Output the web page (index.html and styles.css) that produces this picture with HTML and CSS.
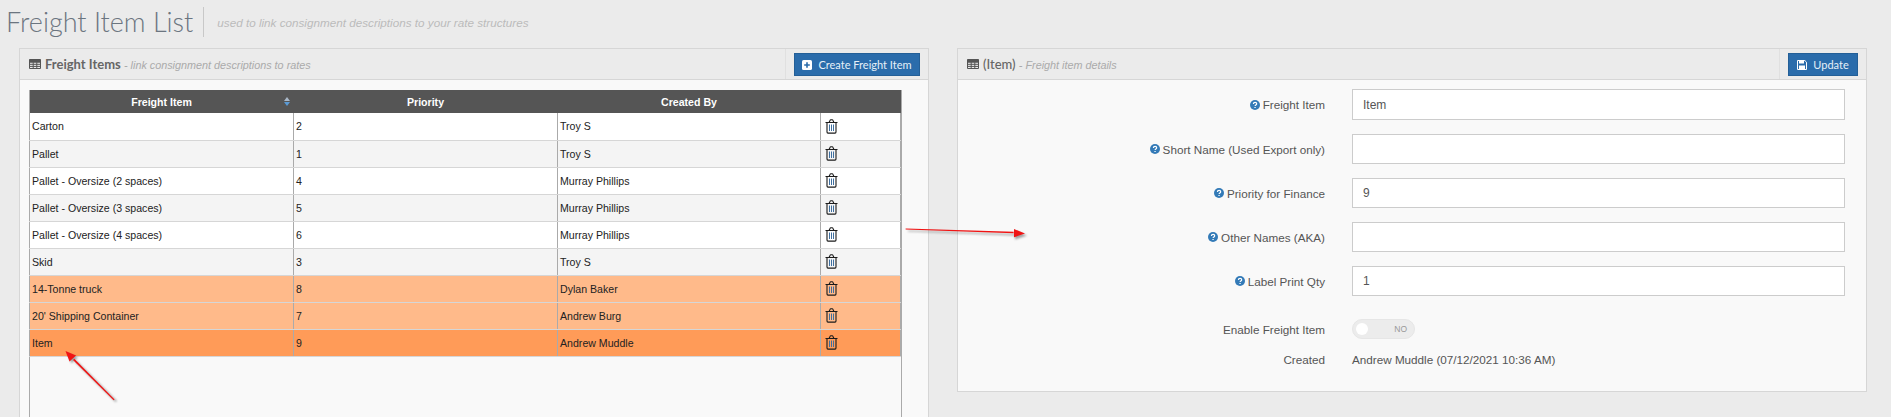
FILE: index.html
```html
<!DOCTYPE html>
<html lang="en">
<head>
<meta charset="utf-8">
<title>Freight Item List</title>
<link rel="stylesheet" href="styles.css">
</head>
<body>
<svg width="0" height="0" class="defs">
  <symbol id="i-table" viewBox="0 0 12 10"><path d="M.5.5h11v9H.5zM.5 3.2h11M.5 5.3h11M.5 7.4h11M4.2 3.2v6.3M7.8 3.2v6.3" fill="none" stroke="currentColor"/><path d="M.5.5h11v2.7H.5z" fill="currentColor"/></symbol>
  <symbol id="i-trash" viewBox="0 0 13 15"><path d="M2 3.5v9.6q0 1 1 1h7q1 0 1-1V3.5M.5 3.5h12M4.2 3.3l.9-2.1q.2-.5.7-.5h1.4q.5 0 .7.5l.9 2.1" fill="none" stroke="currentColor" stroke-width="1.1"/><path d="M4.5 5.5v6.5M6.5 5.5v6.5M8.5 5.5v6.5" fill="none" stroke="#3f6f9f" stroke-width="1"/></symbol>
  <symbol id="i-help" viewBox="0 0 10 10"><circle cx="5" cy="5" r="5" fill="currentColor"/><path d="M3.4 3.9c0-1 .7-1.6 1.7-1.6s1.6.6 1.6 1.4c0 1.2-1.6 1.2-1.6 2.3" fill="none" stroke="#fff" stroke-width="1.2"/><path d="M4.4 6.9h1.3v1.2H4.4z" fill="#fff"/></symbol>
</svg>

<header class="page-head">
  <h1 class="page-title">Freight Item List</h1>
  <p class="page-sub">used to link consignment descriptions to your rate structures</p>
</header>

<main class="panels">
  <section class="panel panel-list">
    <div class="panel-head">
      <h2 class="panel-title"><svg class="icon-table"><use href="#i-table"/></svg>Freight Items <small>- link consignment descriptions to rates</small></h2>
      <div class="panel-action">
        <button class="btn btn-create" type="button">
          <svg class="btn-icon" viewBox="0 0 10 10"><rect width="10" height="10" rx="1.6" fill="#fff"/><path d="M5 2.2v5.6M2.2 5h5.6" stroke="#2a6cab" stroke-width="1.6"/></svg>
          Create Freight Item
        </button>
      </div>
    </div>
    <div class="panel-body list-body">
      <div class="table-wrap">
        <table class="grid">
          <colgroup><col class="c1"><col class="c2"><col class="c3"><col class="c4"></colgroup>
          <thead>
            <tr>
              <th class="sortable">Freight Item<span class="sort"><i class="up"></i><i class="down"></i></span></th>
              <th>Priority</th>
              <th>Created By</th>
              <th></th>
            </tr>
          </thead>
          <tbody>
            <tr><td>Carton</td><td>2</td><td>Troy S</td><td><svg class="trash"><use href="#i-trash"/></svg></td></tr>
            <tr class="alt"><td>Pallet</td><td>1</td><td>Troy S</td><td><svg class="trash"><use href="#i-trash"/></svg></td></tr>
            <tr><td>Pallet - Oversize (2 spaces)</td><td>4</td><td>Murray Phillips</td><td><svg class="trash"><use href="#i-trash"/></svg></td></tr>
            <tr class="alt"><td>Pallet - Oversize (3 spaces)</td><td>5</td><td>Murray Phillips</td><td><svg class="trash"><use href="#i-trash"/></svg></td></tr>
            <tr><td>Pallet - Oversize (4 spaces)</td><td>6</td><td>Murray Phillips</td><td><svg class="trash"><use href="#i-trash"/></svg></td></tr>
            <tr class="alt"><td>Skid</td><td>3</td><td>Troy S</td><td><svg class="trash"><use href="#i-trash"/></svg></td></tr>
            <tr class="flag"><td>14-Tonne truck</td><td>8</td><td>Dylan Baker</td><td><svg class="trash"><use href="#i-trash"/></svg></td></tr>
            <tr class="flag"><td>20' Shipping Container</td><td>7</td><td>Andrew Burg</td><td><svg class="trash"><use href="#i-trash"/></svg></td></tr>
            <tr class="selected"><td>Item</td><td>9</td><td>Andrew Muddle</td><td><svg class="trash"><use href="#i-trash"/></svg></td></tr>
          </tbody>
        </table>
      </div>
    </div>
  </section>

  <section class="panel panel-detail">
    <div class="panel-head">
      <h2 class="panel-title"><svg class="icon-table"><use href="#i-table"/></svg>(Item) <small>- Freight item details</small></h2>
      <div class="panel-action">
        <button class="btn btn-update" type="button">
          <svg class="btn-icon" viewBox="0 0 10 10"><path d="M.5.5h7.3l1.7 1.7v7.3H.5z" fill="none" stroke="#fff"/><path d="M2 .5h5v3H2zM2 5.5h6v4H2z" fill="#fff"/></svg>
          Update
        </button>
      </div>
    </div>
    <form class="panel-body form">
      <label class="f-label"><svg class="help"><use href="#i-help"/></svg>Freight Item</label>
      <input class="f-input f-first" type="text" value="Item">
      <label class="f-label"><svg class="help"><use href="#i-help"/></svg>Short Name (Used Export only)</label>
      <input class="f-input" type="text" value="">
      <label class="f-label"><svg class="help"><use href="#i-help"/></svg>Priority for Finance</label>
      <input class="f-input" type="text" value="9">
      <label class="f-label"><svg class="help"><use href="#i-help"/></svg>Other Names (AKA)</label>
      <input class="f-input" type="text" value="">
      <label class="f-label"><svg class="help"><use href="#i-help"/></svg>Label Print Qty</label>
      <input class="f-input" type="text" value="1">
      <label class="f-label f-toggle-row">Enable Freight Item</label>
      <div class="toggle f-toggle-row"><span class="knob"></span><span class="toggle-text">NO</span></div>
      <div class="f-label f-static">Created</div>
      <div class="f-value f-static">Andrew Muddle (07/12/2021 10:36 AM)</div>
    </form>
  </section>
</main>

<svg class="annotations" width="1891" height="417" viewBox="0 0 1891 417" aria-hidden="true">
  <defs><filter id="soft" x="-30%" y="-30%" width="160%" height="160%"><feGaussianBlur stdDeviation="1.1"/></filter></defs>
  <g filter="url(#soft)" fill="#555" opacity=".55" transform="translate(2 2)">
    <path d="M113.5 400 73 360l1.5-1.3L115 399z"/><path d="M65.5 351l10.5 4.6-6.6 5.6z"/>
    <path d="M906 228.4l107 3.5v1.6l-107-4z"/><path d="M1013 229l12 4.6-12 3.8z"/>
  </g>
  <g fill="#f01414">
    <path d="M113.6 400.2 73 360l1.3-1.2L114.6 399.4z"/><path d="M65.5 351l10.6 4.6-6.6 5.9z"/>
    <path d="M905.6 228.4l108 3.4v1.4l-108-3.6z"/><path d="M1014 229l11 4.6-11 3.6z"/>
  </g>
</svg>
</body>
</html>
```

FILE: styles.css
```css
* { box-sizing: border-box; }
html, body { margin: 0; height: 417px; overflow: hidden; }
body {
  background: #ebebeb;
  font-family: "Liberation Sans", Arial, sans-serif;
  color: #555;
  position: relative;
}
.defs { position: absolute; }

.page-head {
  display: flex;
  align-items: center;
  height: 48px;
  padding: 5px 0 9px 6px;
}
.page-title {
  margin: 0;
  padding-right: 10px;
  font: 300 27px/30px Lato, sans-serif;
  color: #6b7580;
  white-space: nowrap;
  border-right: 1px solid #c8c8c8;
}
.page-sub {
  margin: 0 0 0 13px;
  font-size: 11.7px;
  font-style: italic;
  color: #bbb;
}

.panels {
  display: flex;
  align-items: flex-start;
  gap: 28px;
  padding-left: 19px;
}
.panel {
  border: 1px solid #d6d6d6;
  display: flex;
  flex-direction: column;
}
.panel-list { width: 910px; height: 400px; }
.panel-detail { width: 910px; }

.panel-head {
  display: flex;
  justify-content: space-between;
  height: 31px;
  border-bottom: 1px solid #d6d6d6;
}
.panel-title {
  margin: 0;
  padding-left: 9px;
  display: flex;
  align-items: center;
  font: 700 13px/18px Lato, sans-serif;
  color: #666;
  white-space: pre;
}
.panel-detail .panel-title { font-weight: 500; padding-left: 9px; }
.panel-title small {
  font: italic 400 10.8px "Liberation Sans", Arial, sans-serif;
  color: #aaa;
  margin-top: 2px;
}
.icon-table { width: 12px; height: 10px; margin-right: 4px; color: #555; }
.panel-action {
  display: flex;
  align-items: flex-start;
  padding: 4px 8px 0;
  border-left: 1px solid #e0e0e0;
}
.btn {
  display: flex;
  align-items: center;
  justify-content: center;
  gap: 6px;
  height: 23px;
  padding: 0;
  border: 1px solid #235f97;
  background: #2a6cab;
  color: #e6f0f8;
  font: 400 11px Lato, sans-serif;
  white-space: nowrap;
}
.btn-create { width: 126px; }
.btn-update { width: 70px; }
.btn-icon { width: 10px; height: 10px; flex: none; }

.panel-body { background: #f9f9f9; }
.list-body {
  flex: 1;
  padding: 10px 29px 0 9px;
  display: flex;
}
.table-wrap {
  flex: 1;
  border-left: 1px solid #aaa;
  border-right: 1px solid #aaa;
}
.grid {
  table-layout: fixed;
  border-collapse: collapse;
  width: 871px;
  margin-left: -1px;
  font-size: 10.6px;
  color: #222;
}
.c1 { width: 264px; }
.c2 { width: 264px; }
.c3 { width: 263px; }
.c4 { width: 80px; }
.grid th {
  height: 23px;
  background: #555;
  color: #fff;
  font-size: 10.6px;
  font-weight: 700;
  text-align: center;
  padding: 0;
  position: relative;
}
.sort {
  position: absolute;
  right: 4px;
  top: 7px;
  display: flex;
  flex-direction: column;
  gap: 1px;
}
.sort i { display: block; width: 0; height: 0; border-left: 3px solid transparent; border-right: 3px solid transparent; }
.sort .up { border-bottom: 4px solid #a9b8c8; }
.sort .down { border-top: 4px solid #5b9bd5; }
.grid td {
  height: 27px;
  padding: 0 0 0 2px;
  background: #fff;
  border-bottom: 1px solid #d6d6d6;
  border-left: 1px solid #aaa;
  white-space: nowrap;
}
.grid td:last-child { border-right: 1px solid #aaa; }
.grid .alt td { background: #f4f4f4; }
.grid .flag td { background: #ffba8a; }
.grid .selected td { background: #ff9b58; }
.trash { display: block; width: 13px; height: 15px; margin-left: 2px; color: #1b1b1b; }

.form {
  display: grid;
  grid-template-columns: 367px 493px;
  column-gap: 27px;
  row-gap: 14px;
  padding: 9px 0 24px;
  align-items: center;
}
.f-label {
  display: flex;
  justify-content: flex-end;
  align-items: center;
  font-size: 11.7px;
  color: #555;
}
.help { width: 10px; height: 10px; margin-right: 3px; color: #337ab7; }
.f-input {
  height: 30px;
  width: 493px;
  padding: 0 10px;
  border: 1px solid #ccc;
  background: #fff;
  font: 12px "Liberation Sans", Arial, sans-serif;
  color: #555;
  border-radius: 0;
}
.f-first { height: 31px; }
.f-toggle-row { margin-top: 9px; }
.toggle {
  display: flex;
  align-items: center;
  justify-content: space-between;
  width: 63px;
  height: 20px;
  padding: 0 7px 0 3px;
  background: #ececec;
  border: 1px solid #e6e6e6;
  border-radius: 10px;
}
.knob { width: 12px; height: 12px; border-radius: 50%; background: #fff; }
.toggle-text { font-size: 8.5px; color: #999; }
.f-value { font-size: 11.7px; color: #555; }
.f-static { line-height: 14px; }

.annotations { position: absolute; left: 0; top: 0; pointer-events: none; }
```
